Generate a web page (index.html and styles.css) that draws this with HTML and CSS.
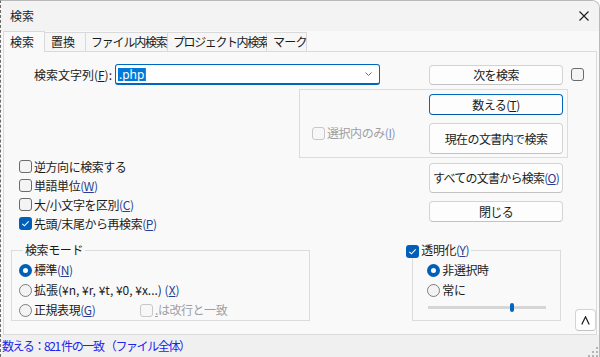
FILE: index.html
```html
<!DOCTYPE html>
<html lang="ja">
<head>
<meta charset="utf-8">
<title>検索</title>
<link rel="stylesheet" href="styles.css">
</head>
<body>
<div class="win">
  <div class="titlebar">
    <span class="title">検索</span>
    <svg class="close" width="10" height="10" viewBox="0 0 10 10"><path d="M0.5 0.5L9.5 9.5M9.5 0.5L0.5 9.5" stroke="#1a1a1a" stroke-width="1.1" fill="none"/></svg>
  </div>
  <div class="tabs">
    <div class="tab sel t1">検索</div>
    <div class="tab t2">置換</div>
    <div class="tab t3">ファイル内検索</div>
    <div class="tab t4">プロジェクト内検索</div>
    <div class="tab t5">マーク</div>
  </div>
  <div class="panel">
    <div class="row-find">
      <label class="find-label">検索文字列(<u>F</u>):</label>
      <div class="combo">
        <span class="hl">.php</span>
        <svg class="chev" width="7" height="4" viewBox="0 0 7 4"><path d="M0.5 0.5L3.5 3.5L6.5 0.5" stroke="#6a6a6a" stroke-width="1" fill="none"/></svg>
      </div>
      <button class="btn btn-next">次を検索</button>
      <span class="cb cb-side"></span>
    </div>

    <div class="selgroup">
      <div class="selgroup-left">
        <span class="cb dis"></span><span class="lbl dis-text">選択内のみ<span class="mn">(<u>I</u>)</span></span>
      </div>
      <div class="btncol">
        <button class="btn focus h21">数える(<u>T</u>)</button>
        <button class="btn h31">現在の文書内で検索</button>
      </div>
    </div>

    <div class="mid">
      <div class="opts">
        <div class="opt"><span class="cb"></span><span class="lbl">逆方向に検索する</span></div>
        <div class="opt"><span class="cb"></span><span class="lbl">単語単位<span class="mn">(<u>W</u>)</span></span></div>
        <div class="opt"><span class="cb"></span><span class="lbl">大/小文字を区別<span class="mn">(<u>C</u>)</span></span></div>
        <div class="opt"><span class="cb on"><svg width="13" height="13" viewBox="0 0 13 13"><path d="M3.3 6.8L5.4 8.8L9.7 4.3" stroke="#fff" stroke-width="1.1" fill="none"/></svg></span><span class="lbl">先頭/末尾から再検索<span class="mn">(<u>P</u>)</span></span></div>
      </div>
      <div class="btncol2">
        <button class="btn h30">すべての文書から検索<span class="mn">(<u>O</u>)</span></button>
        <button class="btn h21">閉じる</button>
      </div>
    </div>

    <div class="bottom">
      <fieldset class="mode">
        <legend>検索モード</legend>
        <div class="ropt"><span class="rb on"></span><span class="lbl">標準<span class="mn">(<u>N</u>)</span></span></div>
        <div class="ropt"><span class="rb"></span><span class="lbl wide">拡張(¥n, ¥r, ¥t, ¥0, ¥x...) <span class="mn">(<u>X</u>)</span></span></div>
        <div class="ropt"><span class="rb"></span><span class="lbl rx">正規表現<span class="mn">(<u>G</u>)</span></span><span class="cb dis"></span><span class="lbl dis-text"><u>.</u>は改行と一致</span></div>
      </fieldset>
      <fieldset class="trans">
        <legend><span class="cb on"><svg width="13" height="13" viewBox="0 0 13 13"><path d="M3.3 6.8L5.4 8.8L9.7 4.3" stroke="#fff" stroke-width="1.1" fill="none"/></svg></span><span class="lbl">透明化<span class="mn">(<u>Y</u>)</span></span></legend>
        <div class="ropt"><span class="rb on"></span><span class="lbl">非選択時</span></div>
        <div class="ropt"><span class="rb"></span><span class="lbl">常に</span></div>
        <div class="slider"><span class="thumb"></span></div>
      </fieldset>
      <button class="btn collapse"><svg width="9" height="9" viewBox="0 0 9 9"><path d="M0.8 8.5L4.5 0.8L8.2 8.5" stroke="#1b1b1b" stroke-width="1.2" fill="none"/></svg></button>
    </div>
  </div>
  <div class="status">
    <span class="status-text">数える：821 件の一致 （ファイル全体）</span>
    <svg class="grip" width="11" height="10" viewBox="0 0 11 10"><g fill="#b4b4b4"><rect x="8" y="0" width="2" height="2"/><rect x="4" y="4" width="2" height="2"/><rect x="8" y="4" width="2" height="2"/><rect x="0" y="8" width="2" height="2"/><rect x="4" y="8" width="2" height="2"/><rect x="8" y="8" width="2" height="2"/></g></svg>
  </div>
</div>
</body>
</html>
```

FILE: styles.css
```css
* { box-sizing: border-box; }
html, body { margin: 0; padding: 0; }
body {
  width: 600px;
  height: 357px;
  overflow: hidden;
  background: #ffffff;
  font-family: "Noto Sans CJK JP", "Noto Sans", sans-serif;
  font-size: 12px;
  color: #1b1b1b;
}
u { text-decoration: underline; text-underline-offset: 1px; }

.win {
  width: 600px;
  height: 357px;
  display: flex;
  flex-direction: column;
  background: #f9f9f9;
  border-top: 1px solid #b9b9b9;
  border-right: 1px solid #b9b9b9;
  border-left: 1px dashed #6a6a6a;
  border-top-right-radius: 8px;
  overflow: hidden;
}

.titlebar {
  height: 30px;
  flex: 0 0 30px;
  background: #f3f3f3;
  display: flex;
  align-items: center;
  justify-content: space-between;
  padding: 0 10px 0 9px;
}
.title { line-height: 16px; color: #1f1f1f; }
.close { display: block; }

.tabs {
  height: 20px;
  flex: 0 0 20px;
  display: flex;
  align-items: flex-end;
  padding-left: 2px;
}
.tab {
  height: 19px;
  display: flex;
  align-items: center;
  padding-left: 6px;
  white-space: nowrap;
  background: #f6f6f6;
  border-top: 1px solid #d9d9d9;
  border-right: 1px solid #d9d9d9;
  line-height: 16px;
}
.tab.sel {
  height: 21px;
  margin-bottom: -1px;
  position: relative;
  z-index: 1;
  background: #f9f9f9;
  border-left: 1px solid #d9d9d9;
}
.t1 { width: 42px; }
.t2 { width: 41px; }
.t3 { width: 82px; padding-left: 5px; letter-spacing: -1.2px; }
.t4 { width: 99px; padding-left: 5px; letter-spacing: -1.4px; }
.t5 { width: 40px; letter-spacing: -0.8px; }

.panel {
  height: 284px;
  flex: 0 0 284px;
  margin: 0 2px;
  border: 1px solid #dadada;
  background: #f9f9f9;
}

.lbl { line-height: 16px; white-space: nowrap; margin-left: 2px; letter-spacing: -0.45px; }
.lbl.wide { letter-spacing: 0; }
.mn { color: #243f94; }
.dis-text { color: #9f9f9f; }
.dis-text .mn { color: #8895bb; }

/* check boxes & radios */
.cb {
  width: 13px;
  height: 13px;
  flex: 0 0 13px;
  display: inline-block;
  border: 1px solid #6b6b6b;
  border-radius: 3px;
  background: #f4f4f4;
}
.cb.on {
  border: none;
  background: #005fb8;
}
.cb.on svg { display: block; }
.cb.dis { border-color: #c8c8c8; background: #f7f7f7; }

.rb {
  width: 13px;
  height: 13px;
  flex: 0 0 13px;
  display: inline-block;
  border: 1px solid #7e7e7e;
  border-radius: 50%;
  background: #f3f3f3;
}
.rb.on {
  border: 4px solid #005fb8;
  background: #ffffff;
}

/* buttons */
.btn {
  font: inherit;
  color: #1b1b1b;
  background: #fdfdfd;
  border: 1px solid #d3d3d3;
  border-bottom-color: #c2c2c2;
  border-radius: 4px;
  padding: 0;
  width: 134px;
  display: flex;
  align-items: center;
  justify-content: center;
  line-height: 16px;
  white-space: nowrap;
  letter-spacing: -0.6px;
}
.btn.focus { border: 1px solid #0067c0; border-bottom-color: #0058a8; }
.h21 { height: 21px; }
.h30 { height: 30px; letter-spacing: -0.75px; }
.h31 { height: 31px; }

/* find row */
.row-find {
  margin-top: 12px;
  height: 21px;
  display: flex;
  align-items: center;
}
.find-label {
  width: 108px;
  margin-right: 3px;
  text-align: right;
  line-height: 16px;
  white-space: nowrap;
}
.combo {
  width: 265px;
  height: 21px;
  border: 1px solid #0067c0;
  border-bottom: 2px solid #0067c0;
  border-radius: 3px;
  background: #ffffff;
  display: flex;
  align-items: center;
  justify-content: space-between;
  padding: 0 7px 0 2px;
}
.hl {
  background: #0078d7;
  color: #ffffff;
  height: 13px;
  line-height: 13px;
  padding: 0 1px;
  font-family: "Noto Sans", "Liberation Sans", sans-serif;
  font-size: 12px;
  border-right: 1px solid #d05a1a;
}
.chev { display: block; }
.btn-next { margin-left: 49px; height: 20px; }
.cb-side { margin-left: 8px; }

/* selection group */
.selgroup {
  margin-top: 4px;
  margin-left: 295px;
  width: 269px;
  height: 69px;
  border: 1px solid #dcdcdc;
  display: flex;
}
.selgroup-left {
  width: 129px;
  padding-left: 12px;
  padding-top: 35px;
  display: flex;
  align-items: flex-start;
}
.selgroup-left .cb { margin-top: 2px; }
.btncol {
  padding-top: 4px;
  display: flex;
  flex-direction: column;
  gap: 8px;
}

/* middle */
.mid {
  display: flex;
  height: 75px;
}
.opts {
  width: 425px;
  padding-left: 15px;
  margin-top: -1px;
}
.opt {
  height: 19px;
  display: flex;
  align-items: center;
}
.btncol2 {
  padding-top: 5px;
  display: flex;
  flex-direction: column;
  gap: 8px;
}

/* bottom */
.bottom {
  margin-top: 9px;
  display: flex;
  align-items: flex-start;
}
fieldset {
  margin: 0;
  border: 1px solid #dcdcdc;
  min-inline-size: 0;
}
legend {
  line-height: 16px;
  font-size: 12px;
}
.mode {
  margin-left: 7px;
  width: 300px;
  padding: 2px 0 0 7px;
}
.mode legend {
  padding: 0 2px;
  margin-left: 4px;
  letter-spacing: -0.4px;
}
.ropt {
  height: 20px;
  display: flex;
  align-items: center;
}
.rx { width: 106px; }
.trans {
  margin-left: 102px;
  width: 149px;
  padding: 2px 0 8px 14px;
}
.trans legend {
  padding: 0 2px 0 0;
  margin-left: -21px;
  display: flex;
  align-items: center;
}
.trans legend .cb { margin-top: 3px; }
.trans legend .lbl { margin-left: 2px; }
.slider {
  margin-top: 3px;
  margin-left: 1px;
  width: 118px;
  height: 9px;
  display: flex;
  align-items: center;
  background: linear-gradient(#d6d6d6, #d6d6d6) center / 100% 3px no-repeat;
}
.thumb {
  margin-left: 82px;
  width: 4px;
  height: 9px;
  border-radius: 2px;
  background: #0067c0;
}
.collapse {
  margin-left: 14px;
  margin-top: 67px;
  width: 21px;
  height: 22px;
  background: #ffffff;
}
.collapse svg { display: block; }

/* status */
.status {
  height: 22px;
  flex: 0 0 22px;
  background: #f0f0f0;
  display: flex;
  align-items: center;
  justify-content: space-between;
  padding-left: 1px;
}
.status-text {
  color: #2222ee;
  line-height: 16px;
  white-space: nowrap;
  letter-spacing: -1.4px;
}
.grip { align-self: flex-end; margin-bottom: 0; }
```
